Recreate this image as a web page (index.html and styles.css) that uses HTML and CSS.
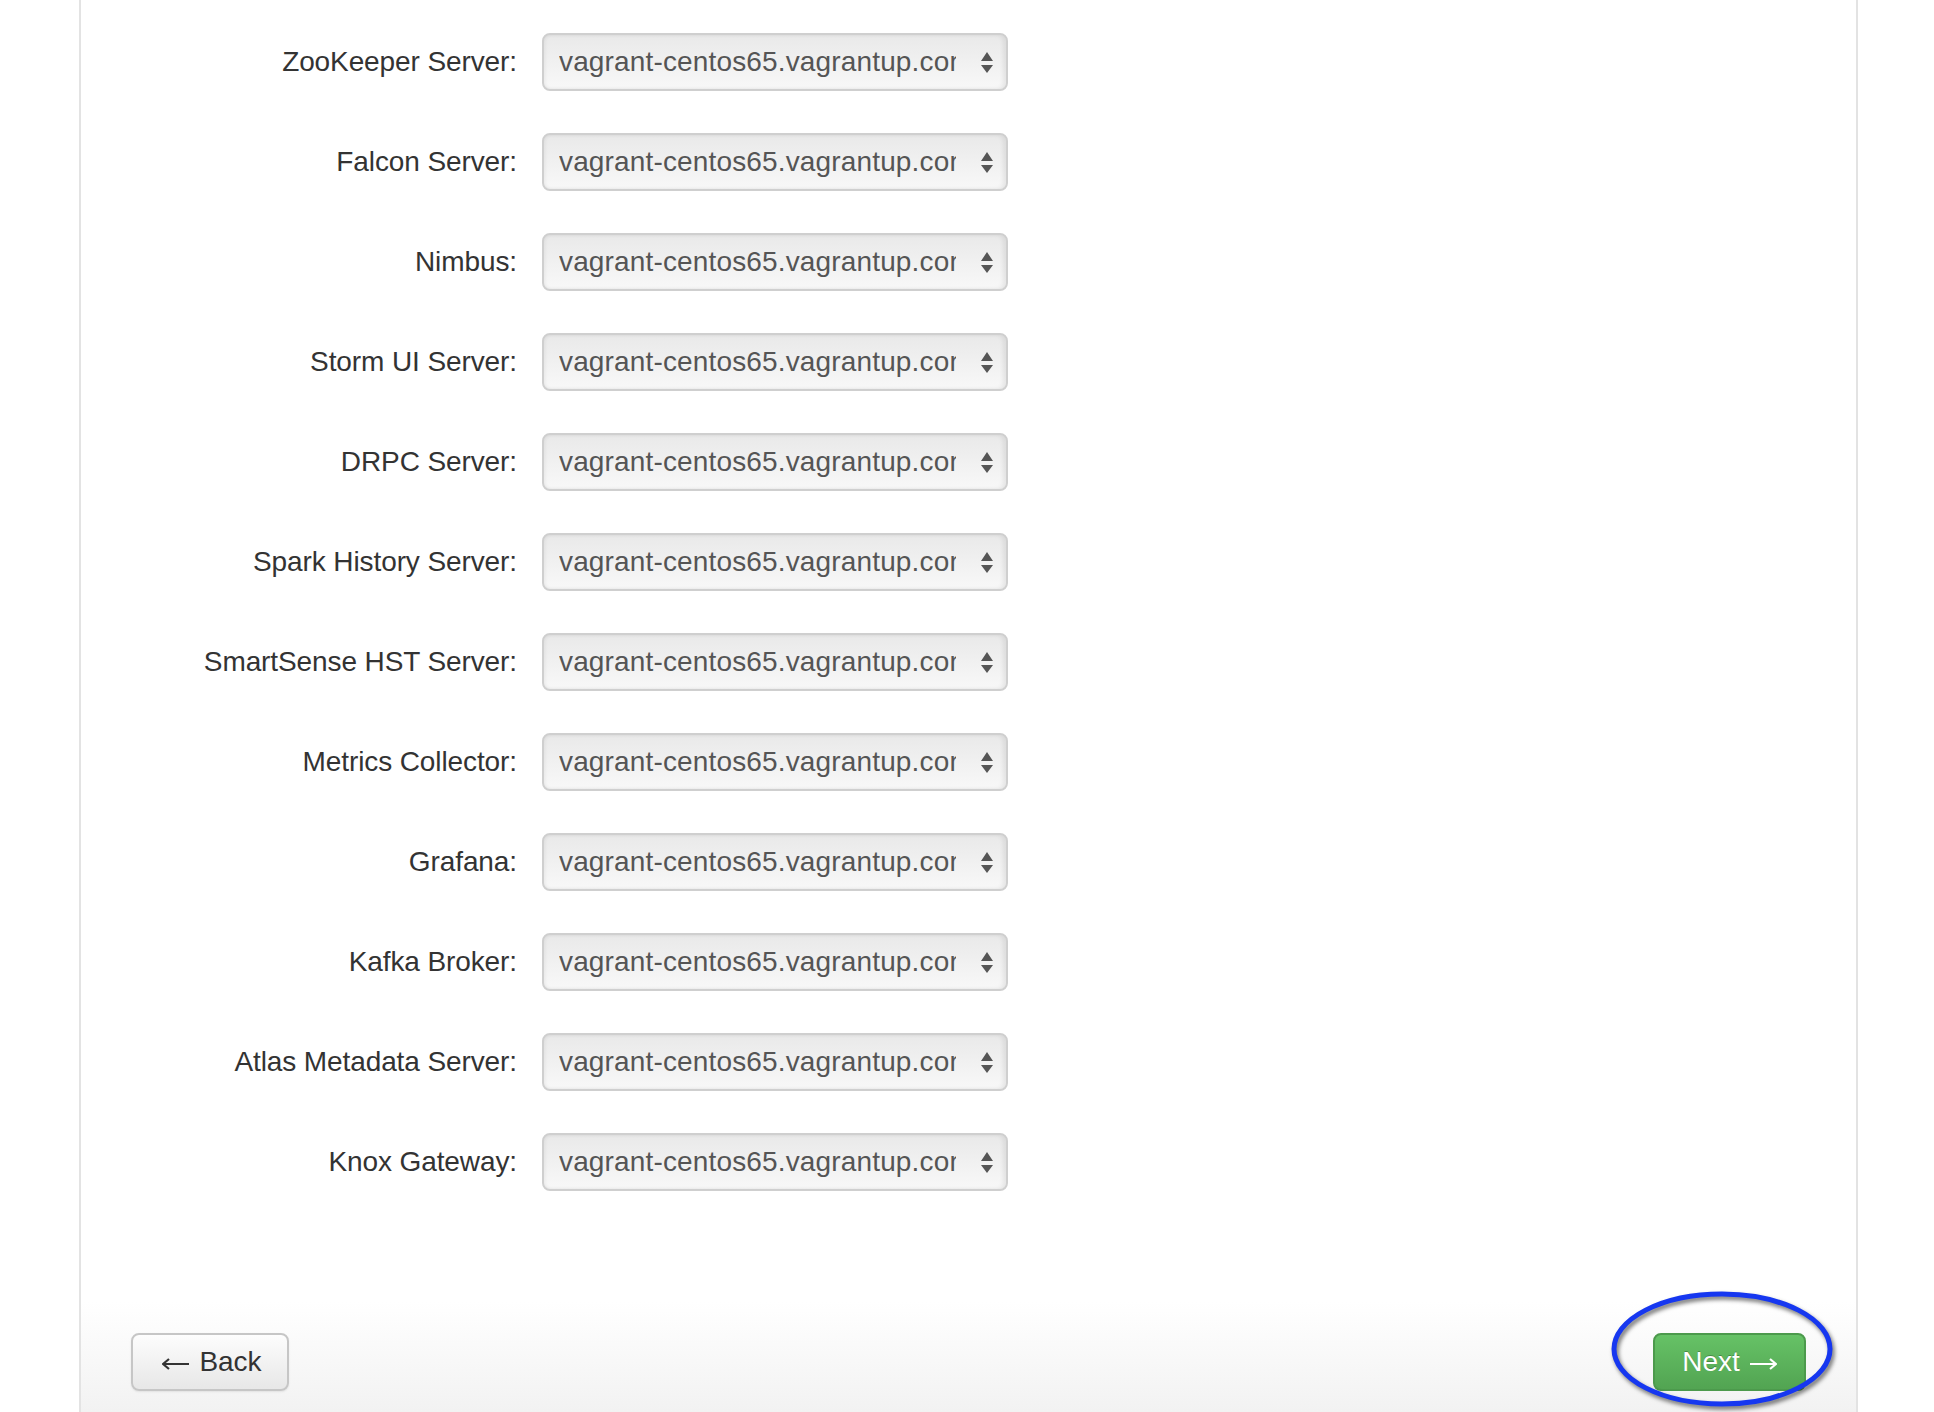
FILE: index.html
```html
<!DOCTYPE html>
<html>
<head>
<meta charset="utf-8">
<link rel="stylesheet" href="styles.css">
</head>
<body>
<div class="page">
  <div class="form">
    <div class="row"><div class="label">ZooKeeper Server:</div><div class="select"><span class="val">vagrant-centos65.vagrantup.com</span><svg class="spin" width="12" height="22" viewBox="0 0 12 22"><path d="M6 0 L12 9 L0 9 Z M0 13 L12 13 L6 21 Z"/></svg></div></div>
    <div class="row"><div class="label">Falcon Server:</div><div class="select"><span class="val">vagrant-centos65.vagrantup.com</span><svg class="spin" width="12" height="22" viewBox="0 0 12 22"><path d="M6 0 L12 9 L0 9 Z M0 13 L12 13 L6 21 Z"/></svg></div></div>
    <div class="row"><div class="label">Nimbus:</div><div class="select"><span class="val">vagrant-centos65.vagrantup.com</span><svg class="spin" width="12" height="22" viewBox="0 0 12 22"><path d="M6 0 L12 9 L0 9 Z M0 13 L12 13 L6 21 Z"/></svg></div></div>
    <div class="row"><div class="label">Storm UI Server:</div><div class="select"><span class="val">vagrant-centos65.vagrantup.com</span><svg class="spin" width="12" height="22" viewBox="0 0 12 22"><path d="M6 0 L12 9 L0 9 Z M0 13 L12 13 L6 21 Z"/></svg></div></div>
    <div class="row"><div class="label">DRPC Server:</div><div class="select"><span class="val">vagrant-centos65.vagrantup.com</span><svg class="spin" width="12" height="22" viewBox="0 0 12 22"><path d="M6 0 L12 9 L0 9 Z M0 13 L12 13 L6 21 Z"/></svg></div></div>
    <div class="row"><div class="label">Spark History Server:</div><div class="select"><span class="val">vagrant-centos65.vagrantup.com</span><svg class="spin" width="12" height="22" viewBox="0 0 12 22"><path d="M6 0 L12 9 L0 9 Z M0 13 L12 13 L6 21 Z"/></svg></div></div>
    <div class="row"><div class="label">SmartSense HST Server:</div><div class="select"><span class="val">vagrant-centos65.vagrantup.com</span><svg class="spin" width="12" height="22" viewBox="0 0 12 22"><path d="M6 0 L12 9 L0 9 Z M0 13 L12 13 L6 21 Z"/></svg></div></div>
    <div class="row"><div class="label">Metrics Collector:</div><div class="select"><span class="val">vagrant-centos65.vagrantup.com</span><svg class="spin" width="12" height="22" viewBox="0 0 12 22"><path d="M6 0 L12 9 L0 9 Z M0 13 L12 13 L6 21 Z"/></svg></div></div>
    <div class="row"><div class="label">Grafana:</div><div class="select"><span class="val">vagrant-centos65.vagrantup.com</span><svg class="spin" width="12" height="22" viewBox="0 0 12 22"><path d="M6 0 L12 9 L0 9 Z M0 13 L12 13 L6 21 Z"/></svg></div></div>
    <div class="row"><div class="label">Kafka Broker:</div><div class="select"><span class="val">vagrant-centos65.vagrantup.com</span><svg class="spin" width="12" height="22" viewBox="0 0 12 22"><path d="M6 0 L12 9 L0 9 Z M0 13 L12 13 L6 21 Z"/></svg></div></div>
    <div class="row"><div class="label">Atlas Metadata Server:</div><div class="select"><span class="val">vagrant-centos65.vagrantup.com</span><svg class="spin" width="12" height="22" viewBox="0 0 12 22"><path d="M6 0 L12 9 L0 9 Z M0 13 L12 13 L6 21 Z"/></svg></div></div>
    <div class="row"><div class="label">Knox Gateway:</div><div class="select"><span class="val">vagrant-centos65.vagrantup.com</span><svg class="spin" width="12" height="22" viewBox="0 0 12 22"><path d="M6 0 L12 9 L0 9 Z M0 13 L12 13 L6 21 Z"/></svg></div></div>
  </div>
  <div class="footer">
    <div class="btn btn-back"><svg class="arrow" width="27" height="12" viewBox="0 0 27 12"><path d="M1 6 H27 M7 1 L1 6 L7 11" fill="none" stroke="#333" stroke-width="2.2"/></svg><span>Back</span></div>
    <div class="btn btn-next"><span>Next</span><svg class="arrow" width="27" height="12" viewBox="0 0 27 12"><path d="M0 6 H26 M20 1 L26 6 L20 11" fill="none" stroke="#fff" stroke-width="2.2"/></svg></div>
  </div>
</div>
<svg class="circle" width="260" height="150" viewBox="0 0 260 150"><ellipse cx="122" cy="69" rx="108" ry="55" fill="none" stroke="#1637f0" stroke-width="5"/></svg>
</body>
</html>
```

FILE: styles.css
```css
html, body {
  margin: 0;
  padding: 0;
  background: #fff;
  font-family: "Liberation Sans", Arial, sans-serif;
}
body {
  width: 1934px;
  height: 1412px;
  overflow: hidden;
  position: relative;
}
.page {
  margin-left: 79px;
  width: 1779px;
  box-sizing: border-box;
  border-left: 2px solid #e3e3e3;
  border-right: 2px solid #e3e3e3;
  min-height: 1412px;
}
.form {
  padding-top: 12px;
}
.row {
  display: flex;
  align-items: center;
  height: 100px;
  gap: 25px;
}
.label {
  width: 436px;
  text-align: right;
  font-size: 28px;
  color: #333;
  letter-spacing: -0.1px;
}
.select {
  width: 466px;
  height: 58px;
  box-sizing: border-box;
  border: 2px solid #cfcfcf;
  border-radius: 8px;
  background: linear-gradient(#e9e9e9, #f8f8f8);
  box-shadow: inset -3px 0 4px rgba(0,0,0,0.07), inset 2px 0 3px rgba(0,0,0,0.04);
  display: flex;
  align-items: center;
  padding-left: 15px;
  position: relative;
}
.val {
  display: block;
  width: 397px;
  overflow: hidden;
  white-space: nowrap;
  font-size: 28px;
  letter-spacing: 0.15px;
  color: #555;
  line-height: 34px;
}
.spin {
  position: absolute;
  left: 437px;
  top: 17px;
  fill: #555;
}
.footer {
  display: flex;
  justify-content: space-between;
  padding: 121px 50px 21px 50px;
  background: linear-gradient(#fff 0, #fff 45%, #f2f2f2 100%);
}
.btn {
  height: 58px;
  box-sizing: border-box;
  border-radius: 8px;
  font-size: 28px;
  display: flex;
  align-items: center;
  justify-content: center;
  gap: 10px;
}
.btn-back {
  width: 158px;
  color: #333;
  border: 2px solid #c6c6c6;
  background: linear-gradient(#fdfdfd, #e7e7e7);
  box-shadow: 0 1px 2px rgba(0,0,0,0.08);
  padding-left: 4px;
}
.btn-next {
  width: 153px;
  color: #fff;
  border: 2px solid #4c9a4c;
  background: linear-gradient(#66c266, #52a452);
  text-shadow: 0 -1px 0 rgba(0,0,0,0.25);
}
.arrow {
  margin-top: 3px;
}
.circle {
  position: absolute;
  left: 1600px;
  top: 1280px;
  filter: drop-shadow(2px 3px 2px rgba(0,0,0,0.55));
}
```
